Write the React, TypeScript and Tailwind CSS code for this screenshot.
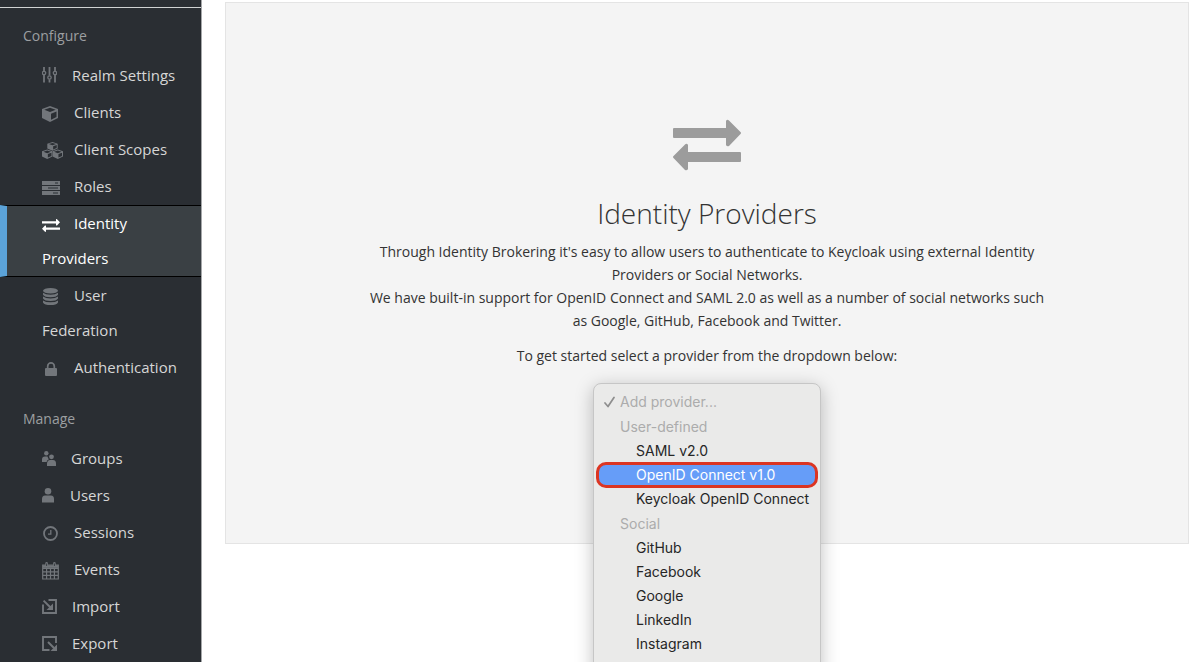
import type { ReactNode } from 'react';

type IconName =
  | 'sliders' | 'cube' | 'cubes' | 'server' | 'exchange' | 'database' | 'lock'
  | 'users' | 'user' | 'clock' | 'calendar' | 'import' | 'export';

const cubeShape = (
  <path fillRule="evenodd" d="M8 0 16 3V12L8 16 0 12V3ZM8 1.7 2.3 3.8 8 6.1 13.7 3.8ZM9 7.7V13.8L14.5 11V5.4Z" />
);

const glyphs: Record<IconName, { box: string; svg: ReactNode }> = {
  sliders: {
    box: 'w-[15px]',
    svg: (
      <svg className="h-4 w-[15px]" viewBox="0 0 15 16" fill="none" stroke="currentColor" strokeWidth="1.3">
        <path strokeWidth="1.8" d="M2 0V4M2 8V15.5M7.5 0V8.5M7.5 12.5V15.5M13 0V4M13 8V15.5" />
        <circle cx="2" cy="6" r="1.7" />
        <circle cx="7.5" cy="10.5" r="1.7" />
        <circle cx="13" cy="6" r="1.7" />
      </svg>
    ),
  },
  cube: {
    box: 'w-[17px] pt-[3px]',
    svg: <svg className="h-4 w-4" viewBox="0 0 16 16" fill="currentColor">{cubeShape}</svg>,
  },
  cubes: {
    box: 'w-[17px] pt-[3px]',
    svg: (
      <svg className="h-[17px] w-[21px] shrink-0" viewBox="0 0 21 17" fill="currentColor">
        <g transform="translate(5.3 0) scale(.65 .55)">{cubeShape}</g>
        <g transform="translate(0 7.6) scale(.65 .58)">{cubeShape}</g>
        <g transform="translate(10.6 7.6) scale(.65 .58)">{cubeShape}</g>
      </svg>
    ),
  },
  server: {
    box: 'w-[17px] pt-[3px]',
    svg: (
      <svg className="h-[14px] w-[18px] shrink-0" viewBox="0 0 18 14">
        <path fill="currentColor" d="M0 0H18V4H0ZM0 5H18V9H0ZM0 10H18V14H0Z" />
        <path stroke="#292e34" d="M13 2H16M6 7H16M11 12H16" />
      </svg>
    ),
  },
  exchange: {
    box: 'w-[17px] pt-1',
    svg: (
      <svg className="h-[13px] w-[18px] shrink-0" viewBox="0 0 18 13" fill="currentColor">
        <path d="M0 2.3H14V.3Q14.4-.3 15 .2L18 3.3 15 6.4Q14.4 6.8 14 6.2V4.4H0ZM18 8.6H4V6.7Q3.6 6.2 3 6.6L0 9.7 3 12.8Q3.6 13.2 4 12.6V10.7H18Z" />
      </svg>
    ),
  },
  database: {
    box: 'w-[17px] pt-[3px] pl-px',
    svg: (
      <svg className="h-[17px] w-[15px]" viewBox="0 0 15 17" fill="currentColor">
        <ellipse cx="7.5" cy="2.8" rx="7.5" ry="2.8" />
        <path d="M0 4.8Q2.5 6.7 7.5 6.7T15 4.8V6.8Q13.5 9.3 7.5 9.3T0 6.8ZM0 8.6Q2.5 10.5 7.5 10.5T15 8.6V10.6Q13.5 13.1 7.5 13.1T0 10.6ZM0 12.4Q2.5 14.3 7.5 14.3T15 12.4V14.4Q13.5 17 7.5 17T0 14.4Z" />
      </svg>
    ),
  },
  lock: {
    box: 'w-[17px] pt-[3px] pl-[3px]',
    svg: (
      <svg className="h-[14px] w-3" viewBox="0 0 12 14">
        <rect y="6" width="12" height="8" rx="1" fill="currentColor" />
        <path d="M2.7 7V4.2A3.3 3.3 0 0 1 9.3 4.2V7" fill="none" stroke="currentColor" strokeWidth="1.7" />
      </svg>
    ),
  },
  users: {
    box: 'w-[14px]',
    svg: (
      <svg className="h-[15px] w-[14px]" viewBox="0 0 14 15" fill="currentColor">
        <circle cx="4.3" cy="2.2" r="2.2" />
        <circle cx="9.5" cy="5.8" r="2.4" />
        <path d="M0 11V8.5Q0 5.5 3 5.5H5.5Q6 7.5 7 8.3 5 9 4.6 11ZM5 15V12.5Q5.3 9 8 9H11Q14 9.3 14 12.5V15Z" />
      </svg>
    ),
  },
  user: {
    box: 'w-[13px]',
    svg: (
      <svg className="h-[15px] w-3" viewBox="0 0 12 15" fill="currentColor">
        <circle cx="6" cy="3.3" r="3.3" />
        <path d="M0 14.5V11Q0 7.5 3 7.5H9Q12 7.5 12 11V14.5Z" />
      </svg>
    ),
  },
  clock: {
    box: 'w-[17px] pt-[3px] pl-px',
    svg: (
      <svg className="h-[15px] w-[15px]" viewBox="0 0 15 15" fill="none" stroke="currentColor">
        <circle cx="7.5" cy="7.5" r="6.5" strokeWidth="1.8" />
        <path d="M7.8 4V8.2H5" strokeWidth="1.3" />
      </svg>
    ),
  },
  calendar: {
    box: 'w-[17px] pt-[3px]',
    svg: (
      <svg className="h-[18px] w-[17px]" viewBox="0 0 17 18" fill="none" stroke="currentColor">
        <path d="M.7 3H16.3V17H.7ZM.7 6.3H16.3M.7 9.8H16.3M.7 13.4H16.3M4.6 6V17M8.5 6V17M12.4 6V17" strokeWidth="1.2" />
        <path d="M1 3.2H16V5.8H1Z" fill="currentColor" stroke="none" />
        <path d="M4.6 1.3V4M12.4 1.3V4" strokeWidth="2.6" strokeLinecap="round" />
        <path d="M4.6 1.5V4M12.4 1.5V4" stroke="#292e34" strokeWidth=".8" />
      </svg>
    ),
  },
  import: {
    box: 'w-[15px]',
    svg: (
      <svg className="h-[15px] w-[15px]" viewBox="0 0 15 15">
        <path d="M6.5 1H14V14H1V5.5" fill="none" stroke="currentColor" strokeWidth="1.9" />
        <path d="M1.6 1.6 8.5 8.5" stroke="currentColor" strokeWidth="2" />
        <path d="M11 4.5V11H4.5Z" fill="currentColor" />
      </svg>
    ),
  },
  export: {
    box: 'w-[15px]',
    svg: (
      <svg className="h-[15px] w-[15px]" viewBox="0 0 15 15">
        <path d="M14 7V1H1V14H7.5" fill="none" stroke="currentColor" strokeWidth="1.9" />
        <path d="M6 6 12 12" stroke="currentColor" strokeWidth="2" />
        <path d="M15 8.5V15H8.5Z" fill="currentColor" />
      </svg>
    ),
  },
};

type Item = { label: string; icon: IconName; active?: boolean };

const configure: Item[] = [
  { label: 'Realm Settings', icon: 'sliders' },
  { label: 'Clients', icon: 'cube' },
  { label: 'Client Scopes', icon: 'cubes' },
  { label: 'Roles', icon: 'server' },
  { label: 'Identity Providers', icon: 'exchange', active: true },
  { label: 'User Federation', icon: 'database' },
  { label: 'Authentication', icon: 'lock' },
];

const manage: Item[] = [
  { label: 'Groups', icon: 'users' },
  { label: 'Users', icon: 'user' },
  { label: 'Sessions', icon: 'clock' },
  { label: 'Events', icon: 'calendar' },
  { label: 'Import', icon: 'import' },
  { label: 'Export', icon: 'export' },
];

function NavSection({ title, items }: { title: string; items: Item[] }) {
  return (
    <section>
      <h2 className="pl-[23px] text-sm leading-[22px] text-[#9c9fa1]">{title}</h2>
      <ul className="mt-[10px]">
        {items.map(({ label, icon, active }) => (
          <li key={label}>
            <a
              href="#"
              className={
                active
                  ? 'block border-y border-l-[7px] border-y-black border-l-[#5ba3d9] bg-[#3a4044] pr-5 pl-[35px] text-[15px] leading-[35px] text-white'
                  : 'block border-y border-l-[7px] border-transparent pr-5 pl-[35px] text-[15px] leading-[35px] text-[#d6d6d6]'
              }
            >
              <span
                className={`mr-[15px] inline-flex h-5 items-center pb-[3px] align-middle ${glyphs[icon].box} ${active ? 'text-white' : 'text-[#72767b]'}`}
              >
                {glyphs[icon].svg}
              </span>
              {label}
            </a>
          </li>
        ))}
      </ul>
    </section>
  );
}

const groups = [
  { label: 'User-defined', options: ['SAML v2.0', 'OpenID Connect v1.0', 'Keycloak OpenID Connect'] },
  { label: 'Social', options: ['GitHub', 'Facebook', 'Google', 'LinkedIn', 'Instagram'] },
];

function ProviderMenu() {
  return (
    <div
      role="listbox"
      aria-label="Add provider"
      className="absolute top-0 left-1/2 w-[228px] -translate-x-1/2 rounded-lg border border-[#c6c6c6] bg-[#eaeae9] px-1 pt-[6px] pb-6 font-['Inter',sans-serif] text-sm text-[#262626] shadow-[0_4px_18px_rgba(0,0,0,0.25)]"
    >
      <button type="button" role="option" aria-selected="true" disabled className="flex h-6 w-full items-center pl-[6px] text-[#acacac]">
        <svg className="mr-[5px] h-3 w-[11px]" viewBox="0 0 11 12" fill="none" stroke="#8e8e8e" strokeWidth="1.7" strokeLinecap="round" strokeLinejoin="round">
          <path d="M1 7 4 10.5 10 1.5" />
        </svg>
        Add provider...
      </button>
      {groups.map((group) => (
        <div key={group.label} role="group" aria-label={group.label}>
          <div className="flex h-[25px] items-center pl-[22px] text-[#acacac]">{group.label}</div>
          {group.options.map((option) => (
            <button
              key={option}
              type="button"
              role="option"
              aria-selected="false"
              className={
                option === 'OpenID Connect v1.0'
                  ? '-mx-[2px] -my-px flex h-[26px] w-[222px] items-center rounded-[10px] border-[3px] border-[#dc3522] bg-[#669df8] pl-[37px] text-white'
                  : 'flex h-6 w-full items-center pl-[38px] whitespace-nowrap'
              }
            >
              {option}
            </button>
          ))}
        </div>
      ))}
    </div>
  );
}

export default function App() {
  return (
    <div className="flex h-screen overflow-hidden bg-white font-['Open_Sans',sans-serif]">
      <nav className="flex w-[202px] shrink-0 flex-col border-r border-[#a5a7a9] bg-[#2a2e33]">
        <div className="h-2 shrink-0 border-b border-[#d0d2d3]" />
        <div className="flex flex-col gap-[22px] pt-[17px]">
          <NavSection title="Configure" items={configure} />
          <NavSection title="Manage" items={manage} />
        </div>
      </nav>
      <main className="min-w-0 flex-1 pt-[2px] pr-[11px] pl-[23px]">
        <div className="flex h-[542px] flex-col items-center border border-[#e4e4e4] bg-[#f4f4f4] text-center text-[#333]">
          <svg className="mt-[116px] h-[52px] w-[68px] text-[#9c9c9c]" viewBox="0 0 68 52" fill="currentColor" aria-hidden="true">
            <path d="M1 9H53V2Q54 0 56 1.5L67.5 13Q68.5 14 67.5 15L56 27Q54 28 53 26V19H1Q0 19 0 18V10Q0 9 1 9Z" />
            <path d="M67 33H15V26Q14 24 12 25.5L.5 37Q-.5 38 .5 39L12 51Q14 52 15 50V43H67Q68 43 68 42V34Q68 33 67 33Z" />
          </svg>
          <h1 className="mt-[22px] text-[28px] leading-10 font-light">Identity Providers</h1>
          <p className="mt-[7px] max-w-[690px] text-sm leading-[23px]">
            Through Identity Brokering it's easy to allow users to authenticate to Keycloak using external Identity
            Providers or Social Networks.
            <br />
            We have built-in support for OpenID Connect and SAML 2.0 as well as a number of social networks such as
            Google, GitHub, Facebook and Twitter.
          </p>
          <p className="mt-3 text-sm leading-[23px]">To get started select a provider from the dropdown below:</p>
          <div className="relative mt-4 h-8 w-full">
            <ProviderMenu />
          </div>
        </div>
      </main>
    </div>
  );
}
